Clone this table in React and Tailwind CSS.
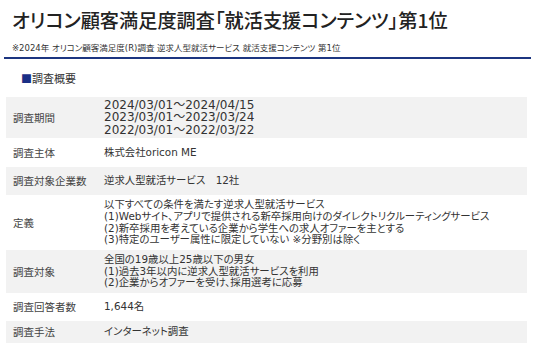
import React from 'react';

const font = { fontFamily: '"DejaVu Sans", "Noto Sans CJK JP", sans-serif' };
const cjk = { fontFamily: '"Noto Sans CJK JP", sans-serif' };

const rows = [
  {
    label: '調査期間',
    h: 'h-[41px]',
    gray: true,
    big: true,
    lines: ['2024/03/01～2024/04/15', '2023/03/01～2023/03/24', '2022/03/01～2022/03/22'],
  },
  { label: '調査主体', h: 'h-[29px]', lines: ['株式会社oricon ME'] },
  { label: '調査対象企業数', h: 'h-[28px]', gray: true, lines: ['逆求人型就活サービス　12社'] },
  {
    label: '定義',
    h: 'h-[55px]',
    lines: [
      '以下すべての条件を満たす逆求人型就活サービス',
      '(1)Webサイト、アプリで提供される新卒採用向けのダイレクトリクルーティングサービス',
      '(2)新卒採用を考えている企業から学生への求人オファーを主とする',
      '(3)特定のユーザー属性に限定していない ※分野別は除く',
    ],
  },
  {
    label: '調査対象',
    h: 'h-[43px]',
    gray: true,
    lines: [
      '全国の19歳以上25歳以下の男女',
      '(1)過去3年以内に逆求人型就活サービスを利用',
      '(2)企業からオファーを受け、採用選考に応募',
    ],
  },
  { label: '調査回答者数', h: 'h-[28px]', lines: ['1,644名'] },
  { label: '調査手法', h: 'h-[22px]', gray: true, lines: ['インターネット調査'] },
];

export default function App() {
  return (
    <div
      className="w-[536px] h-[349px] overflow-hidden bg-white text-[#333] [font-feature-settings:'palt']"
      style={font}
    >
      <h1 className="pl-[12px] pt-[8px] text-[19.2px] leading-[24px] font-medium text-[#222]" style={cjk}>
        オリコン顧客満足度調査「就活支援コンテンツ」第1位
      </h1>
      <p className="pl-[12px] mt-[10px] text-[8.5px] leading-[12px] text-[#333]">
        ※2024年 オリコン顧客満足度(R)調査 逆求人型就活サービス 就活支援コンテンツ 第1位
      </p>
      <div className="ml-[4px] mt-[3px] w-[527px] h-[2px] bg-[#1c3580]"></div>
      <div className="pl-[21px] mt-[12px] text-[11px] leading-[14px] text-[#333] flex items-center" style={cjk}>
        <span className="text-[#1a2f86]">■</span>
        <span>調査概要</span>
      </div>
      <div className="ml-[6px] mt-[12px] w-[521px]">
        {rows.map((row) => (
          <div
            key={row.label}
            className={`flex items-center ${row.h} ${row.gray ? 'bg-[#f2f2f2]' : 'bg-white'}`}
          >
            <div className="w-[98px] pl-[7px] text-[10.5px] text-[#444]" style={cjk}>{row.label}</div>
            <div className={row.big ? 'text-[12px] leading-[12.2px]' : 'text-[10.4px] leading-[11.7px]'}>
              {row.lines.map((line) => (
                <div key={line} className="whitespace-nowrap">{line}</div>
              ))}
            </div>
          </div>
        ))}
      </div>
    </div>
  );
}
